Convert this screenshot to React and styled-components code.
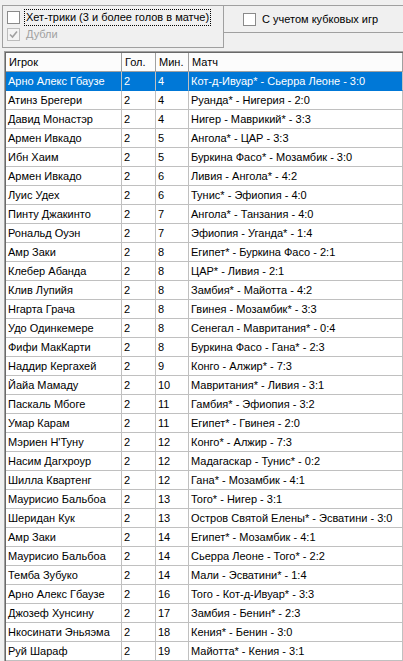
import React from "react";
import styled, { createGlobalStyle } from "styled-components";

const GlobalStyle = createGlobalStyle`
  html, body {
    margin: 0;
    padding: 0;
    background: #f0f0f0;
  }
  body {
    font-family: "Liberation Sans", Arial, sans-serif;
    font-size: 11px;
    color: #000;
    overflow: hidden;
  }
`;

const Page = styled.div`
  width: 403px;
  height: 661px;
  overflow: hidden;
  background: #f0f0f0;
`;

const Filters = styled.div`
  display: flex;
  align-items: flex-start;
  padding: 5px 0 0 2px;
`;

const LeftBox = styled.div`
  width: 216px;
  height: 38px;
  border: 1px solid #a0a0a0;
  padding: 3px 0 0 4px;
  box-sizing: content-box;
  display: flex;
  flex-direction: column;
`;

const RightBox = styled.div`
  flex: 1;
  height: 26px;
  border-top: 1px solid #a0a0a0;
  border-bottom: 1px solid #a0a0a0;
  padding-left: 19px;
  display: flex;
  align-items: center;
`;

const Option = styled.label`
  display: flex;
  align-items: center;
  height: 17px;
`;

const Box = styled.span`
  width: 11px;
  height: 11px;
  border: 1px solid ${(p) => (p.$disabled ? "#bcbcbc" : "#8a8a8a")};
  background: ${(p) => (p.$disabled ? "#f4f4f4" : "#fff")};
  display: flex;
  align-items: center;
  justify-content: center;
  flex: none;
`;

const Caption = styled.span`
  margin-left: 4px;
  padding: 0 1px;
  line-height: 15px;
  border: 1px ${(p) => (p.$focused ? "dotted #000" : "solid transparent")};
  color: ${(p) => (p.$disabled ? "#a0a0a0" : "#000")};
  white-space: nowrap;
`;

const Grid = styled.div`
  margin: 3px 0 0 4px;
  border-top: 1px solid #a0a0a0;
  border-left: 1px solid #a0a0a0;
`;

const GridInner = styled.div`
  border-top: 1px solid #696969;
  border-left: 1px solid #696969;
  background: #fff;
`;

const Row = styled.div`
  display: grid;
  grid-template-columns: 116px 34px 33px 1fr;
  height: 19px;
  background: ${(p) => (p.$selected ? "#0078d7" : p.$head ? "#fcfcfc" : "#fff")};
  color: ${(p) => (p.$selected ? "#fff" : "#000")};
`;

const Cell = styled.div`
  padding-left: ${(p) => (p.$head ? "3px" : "2px")};
  line-height: 18px;
  white-space: nowrap;
  overflow: hidden;
  border-right: 1px solid ${(p) => (p.$head ? "#a0a0a0" : "#c0c0c0")};
  border-bottom: 1px solid
    ${(p) => (p.$head ? "#a0a0a0" : p.$selected ? "#0078d7" : "#c0c0c0")};
`;

function CheckBox({ checked, disabled }) {
  return (
    <Box $disabled={disabled}>
      {checked && (
        <svg width="9" height="9" viewBox="0 0 9 9">
          <path
            d="M1 4.5 L3.5 7 L8 1.5"
            fill="none"
            stroke={disabled ? "#a0a0a0" : "#000"}
            strokeWidth="1.6"
          />
        </svg>
      )}
    </Box>
  );
}

// игрок, минута, матч (голов всегда 2)
const rows = [
  ["Арно Алекс Гбаузе", 4, "Кот-д-Ивуар* - Сьерра Леоне - 3:0"],
  ["Атинз Брегери", 4, "Руанда* - Нигерия - 2:0"],
  ["Давид Монастэр", 4, "Нигер - Маврикий* - 3:3"],
  ["Армен Ивкадо", 5, "Ангола* - ЦАР - 3:3"],
  ["Ибн Хаим", 5, "Буркина Фасо* - Мозамбик - 3:0"],
  ["Армен Ивкадо", 6, "Ливия - Ангола* - 4:2"],
  ["Луис Удех", 6, "Тунис* - Эфиопия - 4:0"],
  ["Пинту Джакинто", 7, "Ангола* - Танзания - 4:0"],
  ["Рональд Оуэн", 7, "Эфиопия - Уганда* - 1:4"],
  ["Амр Заки", 8, "Египет* - Буркина Фасо - 2:1"],
  ["Клебер Абанда", 8, "ЦАР* - Ливия - 2:1"],
  ["Клив Лупийя", 8, "Замбия* - Майотта - 4:2"],
  ["Нгарта Грача", 8, "Гвинея - Мозамбик* - 3:3"],
  ["Удо Одинкемере", 8, "Сенегал - Мавритания* - 0:4"],
  ["Фифи МакКарти", 8, "Буркина Фасо - Гана* - 2:3"],
  ["Наддир Кергахей", 9, "Конго - Алжир* - 7:3"],
  ["Йайа Мамаду", 10, "Мавритания* - Ливия - 3:1"],
  ["Паскаль Мбоге", 11, "Гамбия* - Эфиопия - 3:2"],
  ["Умар Карам", 11, "Египет* - Гвинея - 2:0"],
  ["Мэриен Н'Туну", 12, "Конго* - Алжир - 7:3"],
  ["Насим Дагхроур", 12, "Мадагаскар - Тунис* - 0:2"],
  ["Шилла Квартенг", 12, "Гана* - Мозамбик - 4:1"],
  ["Маурисио Бальбоа", 13, "Того* - Нигер - 3:1"],
  ["Шеридан Кук", 13, "Остров Святой Елены* - Эсватини - 3:0"],
  ["Амр Заки", 14, "Египет* - Мозамбик - 4:1"],
  ["Маурисио Бальбоа", 14, "Сьерра Леоне - Того* - 2:2"],
  ["Темба Зубуко", 14, "Мали - Эсватини* - 1:4"],
  ["Арно Алекс Гбаузе", 16, "Того - Кот-д-Ивуар* - 3:3"],
  ["Джозеф Хунсину", 17, "Замбия - Бенин* - 2:3"],
  ["Нкосинати Эньяэма", 18, "Кения* - Бенин - 3:0"],
  ["Руй Шараф", 19, "Майотта* - Кения - 3:1"],
];

export default function App() {
  return (
    <Page>
      <GlobalStyle />
      <Filters>
        <LeftBox>
          <Option>
            <CheckBox />
            <Caption $focused>Хет-трики (3 и более голов в матче)</Caption>
          </Option>
          <Option>
            <CheckBox checked disabled />
            <Caption $disabled>Дубли</Caption>
          </Option>
        </LeftBox>
        <RightBox>
          <Option>
            <CheckBox />
            <Caption>С учетом кубковых игр</Caption>
          </Option>
        </RightBox>
      </Filters>
      <Grid>
        <GridInner>
          <Row $head>
            <Cell $head>Игрок</Cell>
            <Cell $head>Гол.</Cell>
            <Cell $head>Мин.</Cell>
            <Cell $head>Матч</Cell>
          </Row>
          {rows.map(([player, minute, match], i) => (
            <Row key={i} $selected={i === 0}>
              <Cell $selected={i === 0}>{player}</Cell>
              <Cell $selected={i === 0}>2</Cell>
              <Cell $selected={i === 0}>{minute}</Cell>
              <Cell $selected={i === 0}>{match}</Cell>
            </Row>
          ))}
        </GridInner>
      </Grid>
    </Page>
  );
}
